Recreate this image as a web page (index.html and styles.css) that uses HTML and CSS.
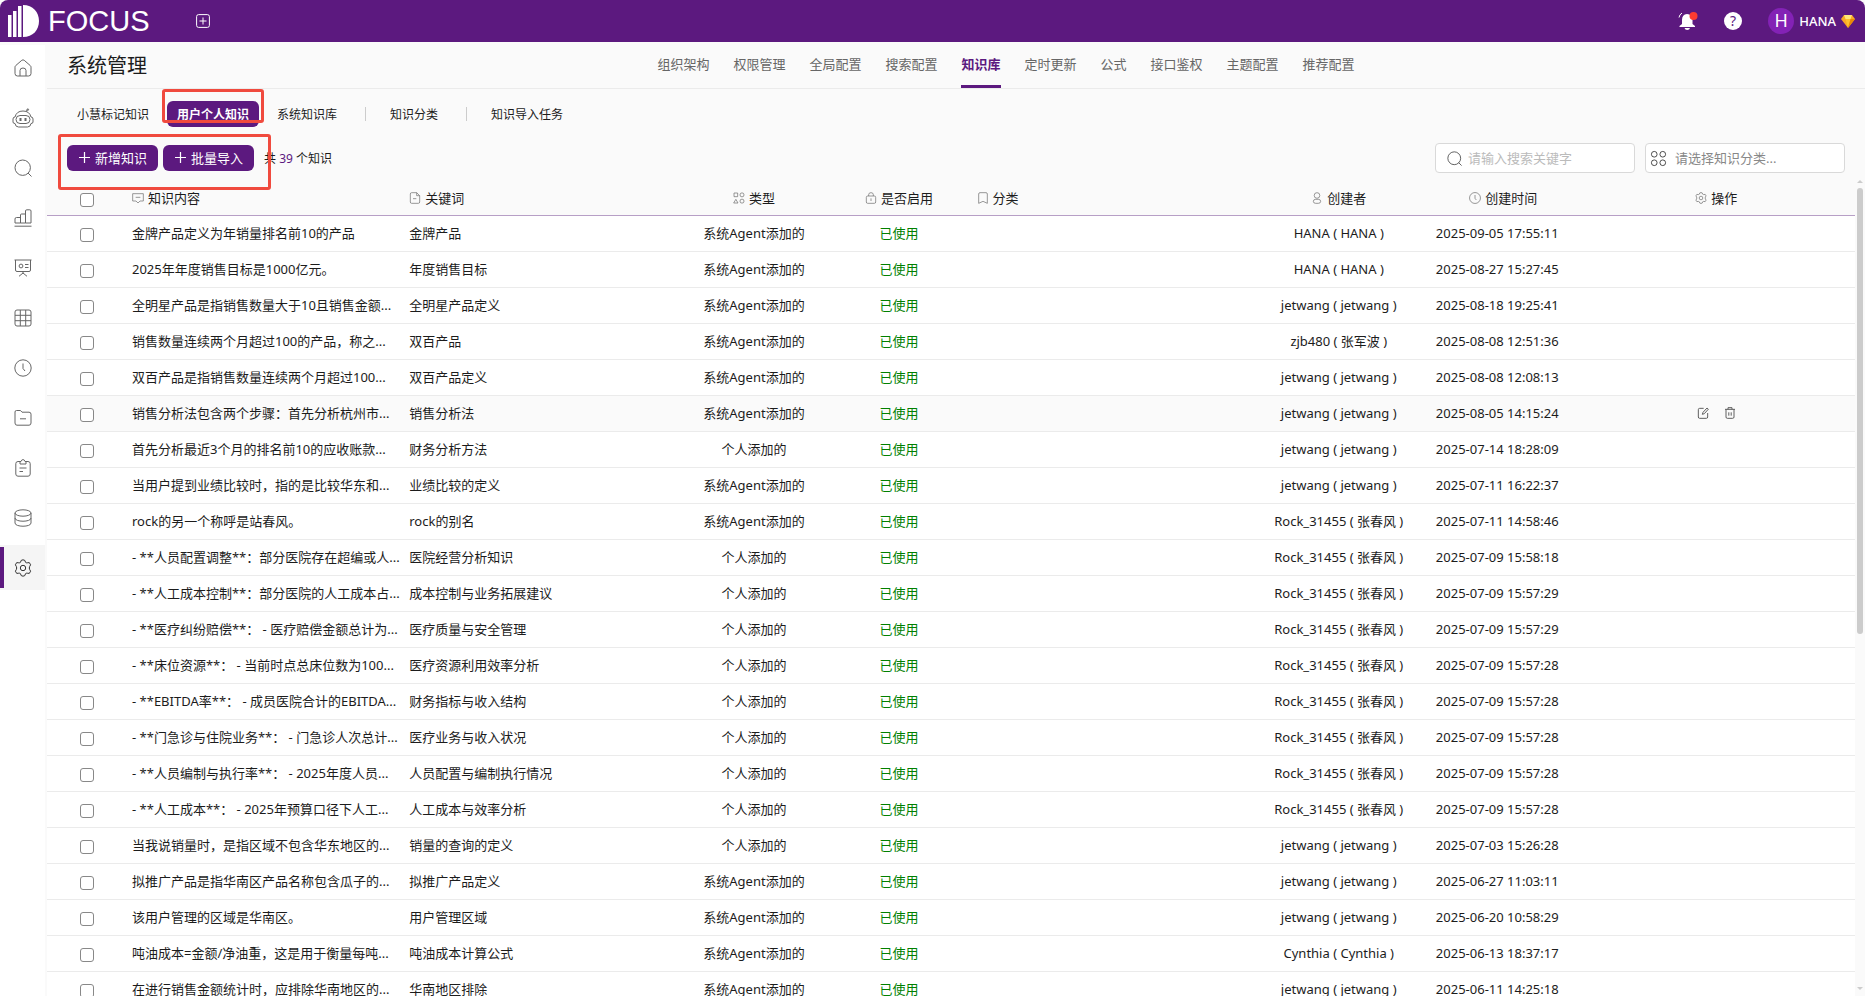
FILE: index.html
```
<!DOCTYPE html>
<html lang="zh-CN">
<head>
    <meta charset="UTF-8">
    <meta name="viewport" content="width=device-width, initial-scale=1.0">
    <title>系统管理 - 知识库</title>
    <link rel="stylesheet" href="styles.css">
</head>
<body>
    <svg class="sprite" aria-hidden="true">
        <symbol id="i-home" viewBox="0 0 18 18"><path d="M1 8.2Q1 7.2 1.8 6.5L7.8 1.3Q9 .4 10.2 1.3L16.2 6.5Q17 7.2 17 8.2V14.5Q17 17 14.5 17H3.5Q1 17 1 14.5ZM6 17V11.5Q6 9 9 9Q12 9 12 11.5V17"/></symbol>
        <symbol id="i-robot" viewBox="0 0 22 20"><path d="M3 9Q4.500 3 11 3Q17.500 3 19 9M3 9Q1 9 1 11V14Q1 15.500 3 15.500Q3.500 19 6.500 19H15.500Q18.500 19 19 15.500Q21 15.500 21 14V11Q21 9 19 9M8 7.500H14Q18 7.500 18 11.500Q18 15.500 14 15.500H8Q4 15.500 4 11.500Q4 7.500 8 7.500ZM14 3.500L15.500 1.500"/><path d="M8.500 10V13M13.500 10V13" stroke-width="2"/><circle cx="15.800" cy="1.600" r=".8"/></symbol>
        <symbol id="i-search" viewBox="0 0 18 18"><circle cx="8.700" cy="8.700" r="7.700"/><path d="M14 14L17.500 17.500"/></symbol>
        <symbol id="i-chart" viewBox="0 0 18 18"><path d="M1 14V10Q1 8.500 2.500 8.500H6.500V14ZM6.500 14V6Q6.500 5 7.500 5H11.500V14ZM11.500 14V2Q11.500 .8 12.700 .8H15.800Q17 .8 17 2V14ZM.5 17.200H17.500"/></symbol>
        <symbol id="i-board" viewBox="0 0 18 18"><path d="M.5 1H17.500M1.500 1V11Q1.500 12.500 3 12.500H15Q16.500 12.500 16.500 11V1M9 12.500V15M9 14L5 17.300M9 14L13 17.300M11 5.500H14.500M11 8.500H14.500"/><circle cx="7" cy="7" r="1.900"/></symbol>
        <symbol id="i-grid" viewBox="0 0 18 18"><rect x="1" y="1" width="16" height="16" rx="2"/><path d="M6.300 1V17M11.700 1V17M1 6.300H17M1 11.700H17"/></symbol>
        <symbol id="i-clock" viewBox="0 0 18 18"><circle cx="9" cy="9" r="8.200"/><path d="M9 4.500V9.500L11 12"/></symbol>
        <symbol id="i-folder" viewBox="0 0 18 18"><path d="M1 3Q1 1.500 2.500 1.500H6.500L8 3.200H15Q17 3.200 17 5.200V14Q17 16.200 15 16.200H3Q1 16.200 1 14ZM6 9.800H12"/></symbol>
        <symbol id="i-clip" viewBox="0 0 18 18"><path d="M6 2.500H4Q1.800 2.500 1.800 4.700V15Q1.800 17.200 4 17.200H14Q16.200 17.200 16.200 15V4.700Q16.200 2.500 14 2.500H12M6 5V2.500H7Q7.500 .6 9 .6Q10.500 .6 11 2.500H12V5ZM5.500 9H12.500M5.500 12.500H9"/></symbol>
        <symbol id="i-db" viewBox="0 0 18 18"><ellipse cx="9" cy="4" rx="8" ry="3.200"/><path d="M1 4V14C1 18.300 17 18.300 17 14V4M1 9C1 13.300 17 13.300 17 9"/></symbol>
        <symbol id="i-gear" viewBox="0 0 18 18"><path d="M9 .8L10.800 1.400L11.500 3.300Q12.200 4 13.200 3.800L15.300 3.600L16.600 5.800L15.600 7.600Q15 9 15.600 10.400L16.600 12.200L15.300 14.400L13.200 14.200Q12.200 14 11.500 14.700L10.800 16.600L9 17.200L7.200 16.600L6.500 14.700Q5.800 14 4.800 14.200L2.700 14.400L1.400 12.200L2.400 10.400Q3 9 2.400 7.600L1.400 5.800L2.700 3.600L4.800 3.800Q5.800 4 6.500 3.300L7.200 1.400Z"/><circle cx="9" cy="9" r="2.700"/></symbol>
        <symbol id="i-comment" viewBox="0 0 18 18"><path d="M1 2.500H17V13.500H12L9 16.500L6 13.500H1ZM5.500 8H12.500"/></symbol>
        <symbol id="i-file" viewBox="0 0 18 18"><path d="M4 1H11.500L16 5.500V15Q16 17 14 17H4Q2 17 2 15V3Q2 1 4 1ZM11.500 1V5.500H16M6 10H11"/></symbol>
        <symbol id="i-shapes" viewBox="0 0 18 18"><path d="M1.500 1.500H7V7H1.500ZM4.300 11L7.500 16.500H1Z"/><circle cx="13.500" cy="4.300" r="3"/><circle cx="13.500" cy="13.700" r="3"/></symbol>
        <symbol id="i-lock" viewBox="0 0 18 18"><rect x="2" y="6" width="14" height="11" rx="2"/><path d="M5.500 6V4Q5.500 1 9 1Q12.500 1 12.500 4V6M9 9.500V13.500"/></symbol>
        <symbol id="i-mark" viewBox="0 0 18 18"><path d="M2.500 3Q2.500 1 4.500 1H13.500Q15.500 1 15.500 3V17L9 14L2.500 17Z"/></symbol>
        <symbol id="i-user" viewBox="0 0 18 18"><circle cx="9" cy="5.200" r="4.200"/><path d="M7 11H11Q14.500 11 14.500 14Q14.500 17 11 17H7Q3.500 17 3.500 14Q3.500 11 7 11Z"/></symbol>
        <symbol id="i-edit" viewBox="0 0 18 18"><path d="M10 2H4Q2 2 2 4V15Q2 17 4 17H14Q16 17 16 15V9M8 11L9 8L15 1.500L17 3.300L11 10Z"/></symbol>
        <symbol id="i-trash" viewBox="0 0 18 18"><path d="M1.500 3.500H16.500M6 3.500V1H12V3.500M3 3.500V15Q3 17 5 17H13Q15 17 15 15V3.500M7.200 8V13M10.800 8V13"/></symbol>
        <symbol id="i-cats" viewBox="0 0 18 18"><circle cx="4.500" cy="4.500" r="3"/><circle cx="13.500" cy="4.500" r="3"/><circle cx="4.500" cy="13.500" r="3"/><circle cx="13.500" cy="13.500" r="3"/></symbol>
        <symbol id="i-plus" viewBox="0 0 18 18"><path d="M9 0V18M0 9H18"/></symbol>
    </svg>

    <header class="topbar">
        <a class="logo" href="#" aria-label="FOCUS">
            <svg class="logo-mark" viewBox="0 0 31 32"><path d="M0 10H3.500V32H0ZM5 6H8.500V32H5ZM10 1H13.500V32H10ZM15 0C25 0 31 7 31 16S25 32 15 32Z"/></svg>
            <span>FOCUS</span>
        </a>
        <button class="icon-btn" type="button" aria-label="新建">
            <svg viewBox="0 0 14 14" width="14" height="14"><rect x=".6" y=".6" width="12.800" height="12.800" rx="2"/><path d="M7 3.500V10.500M3.500 7H10.500"/></svg>
        </button>
        <div class="topbar-right">
            <button class="icon-btn" type="button" aria-label="通知">
                <svg class="bell" viewBox="0 0 20 19" width="20" height="19"><path class="solid" d="M9 2Q14.500 2.500 14.500 8V12L17 14V15H1.500V14L4 12V8Q4 2.500 9 2ZM6.500 16H12Q11.500 18 9.200 18Q7 18 6.500 16Z"/><path d="M1 5.500Q1.500 2.500 4 1"/><circle class="dot" cx="15.500" cy="4" r="4"/></svg>
            </button>
            <button class="icon-btn" type="button" aria-label="帮助"><span class="help">?</span></button>
            <a class="account" href="#">
                <span class="avatar">H</span>
                <span>HANA</span>
                <svg viewBox="0 0 14 13" width="14" height="13"><path d="M3 0H11L14 4L7 13L0 4Z" fill="#f9a825"/><path d="M3 0H11L9.500 4H4.500Z" fill="#ffe57a"/><path d="M4.500 4H9.500L7 13Z" fill="#ffc02e"/><path d="M9.500 4H14L7 13Z" fill="#e88a06"/></svg>
            </a>
        </div>
    </header>

    <div class="layout">
        <nav class="sidebar" aria-label="主菜单">
            <a href="#" aria-label="首页"><svg><use href="#i-home"/></svg></a>
            <a href="#" aria-label="小慧"><svg class="robot"><use href="#i-robot"/></svg></a>
            <a href="#" aria-label="搜索"><svg><use href="#i-search"/></svg></a>
            <a href="#" aria-label="图表"><svg><use href="#i-chart"/></svg></a>
            <a href="#" aria-label="看板"><svg><use href="#i-board"/></svg></a>
            <a href="#" aria-label="数据表"><svg><use href="#i-grid"/></svg></a>
            <a href="#" aria-label="历史"><svg><use href="#i-clock"/></svg></a>
            <a href="#" aria-label="文件夹"><svg><use href="#i-folder"/></svg></a>
            <a href="#" aria-label="任务"><svg><use href="#i-clip"/></svg></a>
            <a href="#" aria-label="数据源"><svg><use href="#i-db"/></svg></a>
            <a href="#" class="active" aria-label="系统管理"><svg><use href="#i-gear"/></svg></a>
        </nav>

        <main class="main">
            <div class="page-head">
                <h1>系统管理</h1>
                <nav class="page-nav">
                    <a href="#">组织架构</a>
                    <a href="#">权限管理</a>
                    <a href="#">全局配置</a>
                    <a href="#">搜索配置</a>
                    <a href="#" class="active">知识库</a>
                    <a href="#">定时更新</a>
                    <a href="#">公式</a>
                    <a href="#">接口鉴权</a>
                    <a href="#">主题配置</a>
                    <a href="#">推荐配置</a>
                </nav>
            </div>

            <div class="subtabs">
                <button type="button">小慧标记知识</button>
                <div class="marked">
                    <button type="button" class="active">用户个人知识</button>
                    <span class="mark mark-tab"></span>
                </div>
                <button type="button">系统知识库</button>
                <span class="divider"></span>
                <button type="button">知识分类</button>
                <span class="divider"></span>
                <button type="button">知识导入任务</button>
            </div>

            <div class="toolbar">
                <div class="marked">
                    <button type="button" class="primary"><svg><use href="#i-plus"/></svg>新增知识</button>
                    <button type="button" class="primary"><svg><use href="#i-plus"/></svg>批量导入</button>
                    <span class="mark mark-actions"></span>
                </div>
                <span class="count">共 <b>39</b> 个知识</span>
                <div class="filters">
                    <label class="field">
                        <svg><use href="#i-search"/></svg>
                        <input type="text" placeholder="请输入搜索关键字" aria-label="搜索关键字">
                    </label>
                    <label class="field field-select">
                        <svg><use href="#i-cats"/></svg>
                        <select aria-label="知识分类"><option>请选择知识分类...</option></select>
                    </label>
                </div>
            </div>

            <div class="table-wrap">
                <div class="table-box">
                    <table>
                        <colgroup>
                            <col class="c-check"><col><col><col class="c-type"><col class="c-type"><col><col class="c-user"><col class="c-time"><col>
                        </colgroup>
                        <thead>
                            <tr>
                                <th class="center"><input type="checkbox" aria-label="全选"></th>
                                <th><svg><use href="#i-comment"/></svg>知识内容</th>
                                <th><svg><use href="#i-file"/></svg>关键词</th>
                                <th class="center"><svg><use href="#i-shapes"/></svg>类型</th>
                                <th class="center"><svg><use href="#i-lock"/></svg>是否启用</th>
                                <th><svg><use href="#i-mark"/></svg>分类</th>
                                <th class="center"><svg><use href="#i-user"/></svg>创建者</th>
                                <th class="center"><svg><use href="#i-clock"/></svg>创建时间</th>
                                <th class="center"><svg><use href="#i-gear"/></svg>操作</th>
                            </tr>
                        </thead>
                        <tbody id="rows"></tbody>
                    </table>
                </div>
                <div class="scrollbar"><span class="up"></span><span class="thumb"></span><span class="down"></span></div>
            </div>
        </main>
    </div>

    <script src="app.js"></script>
</body>
</html>
```

FILE: styles.css
```
* {
    box-sizing: border-box;
}
body {
    margin: 0;
    height: 100vh;
    display: flex;
    flex-direction: column;
    overflow: hidden;
    background: #fafafa;
    color: #1c1c1c;
    font-family: "Noto Sans", "Noto Sans CJK SC", sans-serif;
    font-size: 13px;
}
a {
    color: inherit;
    text-decoration: none;
}
button {
    font: inherit;
    border: none;
    background: none;
    padding: 0;
    cursor: pointer;
}
svg {
    fill: none;
    stroke: currentColor;
    flex: none;
}
.sprite {
    display: none;
}

/* 顶部栏 */
.topbar {
    flex: none;
    display: flex;
    align-items: center;
    height: 42px;
    padding: 0 10px 0 8px;
    background: #5c197f;
    border-radius: 8px 8px 0 0;
    color: #fff;
}
.logo {
    display: flex;
    align-items: center;
    gap: 9px;
    width: 188px;
    font-family: "Liberation Sans", Arial, sans-serif;
    font-size: 29px;
    line-height: 42px;
}
.logo-mark {
    width: 31px;
    height: 32px;
    fill: #fff;
    stroke: none;
}
.icon-btn {
    display: flex;
    color: #fff;
}
.topbar-right {
    margin-left: auto;
    display: flex;
    align-items: center;
    gap: 26px;
}
.bell .solid {
    fill: #fff;
    stroke: none;
}
.bell .dot {
    fill: #ff3b30;
    stroke: none;
}
.help {
    width: 18px;
    height: 18px;
    border-radius: 50%;
    background: #fff;
    color: #5c197f;
    font-size: 14px;
    line-height: 18px;
    text-align: center;
}
.account {
    display: flex;
    align-items: center;
    gap: 5px;
    font-weight: 500;
}
.account svg {
    stroke: none;
}
.avatar {
    width: 26px;
    height: 26px;
    border-radius: 50%;
    background: #8322b5;
    font-size: 18px;
    font-weight: 400;
    line-height: 24px;
    text-align: center;
}

/* 左侧菜单 */
.layout {
    flex: 1;
    min-height: 0;
    display: flex;
    gap: 2px;
}
.sidebar {
    flex: none;
    display: flex;
    flex-direction: column;
    gap: 5px;
    width: 45px;
    margin-top: 3px;
    background: #fff;
    color: #666;
}
.sidebar a {
    display: flex;
    align-items: center;
    justify-content: center;
    height: 45px;
}
.sidebar svg {
    width: 18px;
    height: 18px;
}
.sidebar .robot {
    width: 22px;
    height: 20px;
}
.sidebar .active {
    background: linear-gradient(#5c197f, #5c197f) 0 center / 4px 41px no-repeat #f5f5f5;
    color: #333;
}

/* 页面标题与导航 */
.main {
    flex: 1;
    min-width: 0;
    display: flex;
    flex-direction: column;
}
.page-head {
    flex: none;
    display: flex;
    height: 47px;
    padding-left: 20px;
    border-bottom: 1px solid #ebebeb;
}
.page-head h1 {
    margin: 0;
    font-size: 20px;
    font-weight: 400;
    line-height: 48px;
}
.page-nav {
    flex: 1;
    display: flex;
    justify-content: center;
    gap: 24px;
    color: #666;
    line-height: 44px;
}
.page-nav .active {
    color: #5c197f;
    font-weight: 700;
    border-bottom: 3px solid #5c197f;
}
.subtabs {
    flex: none;
    display: flex;
    align-items: center;
    gap: 8px;
    height: 50px;
    padding: 0 20px;
    font-size: 12px;
}
.subtabs button {
    height: 26px;
    padding: 0 10px;
    border-radius: 6px;
    color: #1c1c1c;
}
.subtabs .active {
    background: #5c197f;
    color: #fff;
    font-weight: 700;
}
.divider {
    width: 1px;
    height: 14px;
    margin: 0 6px 0 10px;
    background: #ccc;
}

/* 红色标注框 */
.marked {
    position: relative;
    display: flex;
    gap: 5px;
}
.mark {
    position: absolute;
    border: 3px solid #f04a3e;
    border-radius: 3px;
    pointer-events: none;
}
.mark-tab {
    inset: -12px -5px 4px -5px;
}
.mark-actions {
    inset: -11px -17px -19px -9px;
}

/* 工具栏 */
.toolbar {
    flex: none;
    display: flex;
    align-items: center;
    height: 40px;
    padding: 0 20px 2px;
}
.primary {
    display: flex;
    align-items: center;
    gap: 5px;
    height: 26px;
    padding: 0 11px 2px 12px;
    border-radius: 6px;
    background: #5c197f;
    color: #fff;
}
.primary svg {
    width: 11px;
    height: 11px;
    stroke-width: 2;
}
.count {
    margin-left: 10px;
    font-size: 12px;
}
.count b {
    color: #5c197f;
    font-weight: 400;
}
.filters {
    display: flex;
    gap: 10px;
    margin-left: auto;
}
.field {
    display: flex;
    align-items: center;
    gap: 6px;
    width: 200px;
    height: 30px;
    padding: 0 11px;
    border: 1px solid #d9d9d9;
    border-radius: 4px;
    background: #fff;
    color: #444;
}
.field-select {
    gap: 8px;
    padding: 0 4px;
}
.field svg {
    width: 15px;
    height: 15px;
}
.field-select svg {
    width: 17px;
    height: 17px;
}
.field input,
.field select {
    flex: 1;
    min-width: 0;
    padding: 0;
    border: none;
    outline: none;
    appearance: none;
    background: none;
    font: inherit;
    color: #888;
}
.field input::placeholder {
    color: #bbb;
}

/* 知识列表 */
.table-wrap {
    flex: 1;
    min-height: 0;
    display: flex;
    overflow: hidden;
}
.table-box {
    flex: 1;
    min-width: 0;
    overflow: hidden;
}
table {
    width: 100%;
    table-layout: fixed;
    border-collapse: separate;
    border-spacing: 0;
}
.c-check {
    width: 80px;
}
.c-type {
    width: 145px;
}
.c-user {
    width: 180px;
}
.c-time {
    width: 149px;
}
th,
td {
    height: 36px;
    padding: 0 5px 1px;
    border-bottom: 1px solid #ebebeb;
    font-weight: 400;
    line-height: 18px;
    text-align: left;
    white-space: nowrap;
}
th {
    height: 37px;
    padding-top: 3px;
    border-bottom-color: #b79fc6;
}
th svg {
    width: 12px;
    height: 12px;
    margin-right: 4px;
    vertical-align: -1px;
    color: #666;
}
td {
    background: #fff;
}
th.center,
td.center {
    text-align: center;
}
td.time {
    padding-right: 17px;
}
.used {
    color: #008000;
}
.hover td {
    background: #fafafa;
}
.actions {
    display: flex;
    justify-content: center;
    gap: 15px;
    color: #555;
}
.actions button {
    display: flex;
    color: inherit;
}
.actions svg {
    width: 12px;
    height: 12px;
    stroke-width: 1.4;
}
input[type="checkbox"] {
    appearance: none;
    width: 14px;
    height: 14px;
    margin: 1px 0 0;
    border: 1px solid #888;
    border-radius: 3px;
    background: #fff;
    vertical-align: middle;
}
.scrollbar {
    flex: none;
    display: flex;
    flex-direction: column;
    align-items: center;
    gap: 5px;
    width: 10px;
    padding: 1px 0 6px;
}
.up,
.down {
    border: 3px solid transparent;
}
.up {
    border-top: none;
    border-bottom-color: #ccc;
}
.down {
    margin-top: auto;
    border-bottom: none;
    border-top-color: #ccc;
}
.thumb {
    width: 6px;
    height: 55%;
    border-radius: 3px;
    background: #ccc;
}
```

FILE: app.js
```
const AGENT = '系统Agent添加的';
const OWN = '个人添加的';
const JET = 'jetwang ( jetwang )';
const ROCK = 'Rock_31455 ( 张春风 )';

// 内容, 关键词, 类型, 创建者, 创建时间
const rows = [
    ['金牌产品定义为年销量排名前10的产品', '金牌产品', AGENT, 'HANA ( HANA )', '2025-09-05 17:55:11'],
    ['2025年年度销售目标是1000亿元。', '年度销售目标', AGENT, 'HANA ( HANA )', '2025-08-27 15:27:45'],
    ['全明星产品是指销售数量大于10且销售金额...', '全明星产品定义', AGENT, JET, '2025-08-18 19:25:41'],
    ['销售数量连续两个月超过100的产品，称之...', '双百产品', AGENT, 'zjb480 ( 张军波 )', '2025-08-08 12:51:36'],
    ['双百产品是指销售数量连续两个月超过100...', '双百产品定义', AGENT, JET, '2025-08-08 12:08:13'],
    ['销售分析法包含两个步骤：首先分析杭州市...', '销售分析法', AGENT, JET, '2025-08-05 14:15:24'],
    ['首先分析最近3个月的排名前10的应收账款...', '财务分析方法', OWN, JET, '2025-07-14 18:28:09'],
    ['当用户提到业绩比较时，指的是比较华东和...', '业绩比较的定义', AGENT, JET, '2025-07-11 16:22:37'],
    ['rock的另一个称呼是站春风。', 'rock的别名', AGENT, ROCK, '2025-07-11 14:58:46'],
    ['- **人员配置调整**：部分医院存在超编或人...', '医院经营分析知识', OWN, ROCK, '2025-07-09 15:58:18'],
    ['- **人工成本控制**：部分医院的人工成本占...', '成本控制与业务拓展建议', OWN, ROCK, '2025-07-09 15:57:29'],
    ['- **医疗纠纷赔偿**： - 医疗赔偿金额总计为...', '医疗质量与安全管理', OWN, ROCK, '2025-07-09 15:57:29'],
    ['- **床位资源**： - 当前时点总床位数为100...', '医疗资源利用效率分析', OWN, ROCK, '2025-07-09 15:57:28'],
    ['- **EBITDA率**： - 成员医院合计的EBITDA...', '财务指标与收入结构', OWN, ROCK, '2025-07-09 15:57:28'],
    ['- **门急诊与住院业务**： - 门急诊人次总计...', '医疗业务与收入状况', OWN, ROCK, '2025-07-09 15:57:28'],
    ['- **人员编制与执行率**： - 2025年度人员...', '人员配置与编制执行情况', OWN, ROCK, '2025-07-09 15:57:28'],
    ['- **人工成本**： - 2025年预算口径下人工...', '人工成本与效率分析', OWN, ROCK, '2025-07-09 15:57:28'],
    ['当我说销量时，是指区域不包含华东地区的...', '销量的查询的定义', OWN, JET, '2025-07-03 15:26:28'],
    ['拟推广产品是指华南区产品名称包含瓜子的...', '拟推广产品定义', AGENT, JET, '2025-06-27 11:03:11'],
    ['该用户管理的区域是华南区。', '用户管理区域', AGENT, JET, '2025-06-20 10:58:29'],
    ['吨油成本=金额/净油重，这是用于衡量每吨...', '吨油成本计算公式', AGENT, 'Cynthia ( Cynthia )', '2025-06-13 18:37:17'],
    ['在进行销售金额统计时，应排除华南地区的...', '华南地区排除', AGENT, JET, '2025-06-11 14:25:18']
];

// 当前悬停的行显示操作按钮
const hoverRow = 5;
const actions = `<div class="actions">
    <button type="button" aria-label="编辑"><svg><use href="#i-edit"/></svg></button>
    <button type="button" aria-label="删除"><svg><use href="#i-trash"/></svg></button>
</div>`;

document.getElementById('rows').innerHTML = rows.map(([content, keyword, type, user, time], i) => `
    <tr class="${i === hoverRow ? 'hover' : ''}">
        <td class="center"><input type="checkbox" aria-label="选择 ${keyword}"></td>
        <td>${content}</td>
        <td>${keyword}</td>
        <td class="center">${type}</td>
        <td class="center used">已使用</td>
        <td></td>
        <td class="center">${user}</td>
        <td class="center time">${time}</td>
        <td>${i === hoverRow ? actions : ''}</td>
    </tr>`).join('');
```
